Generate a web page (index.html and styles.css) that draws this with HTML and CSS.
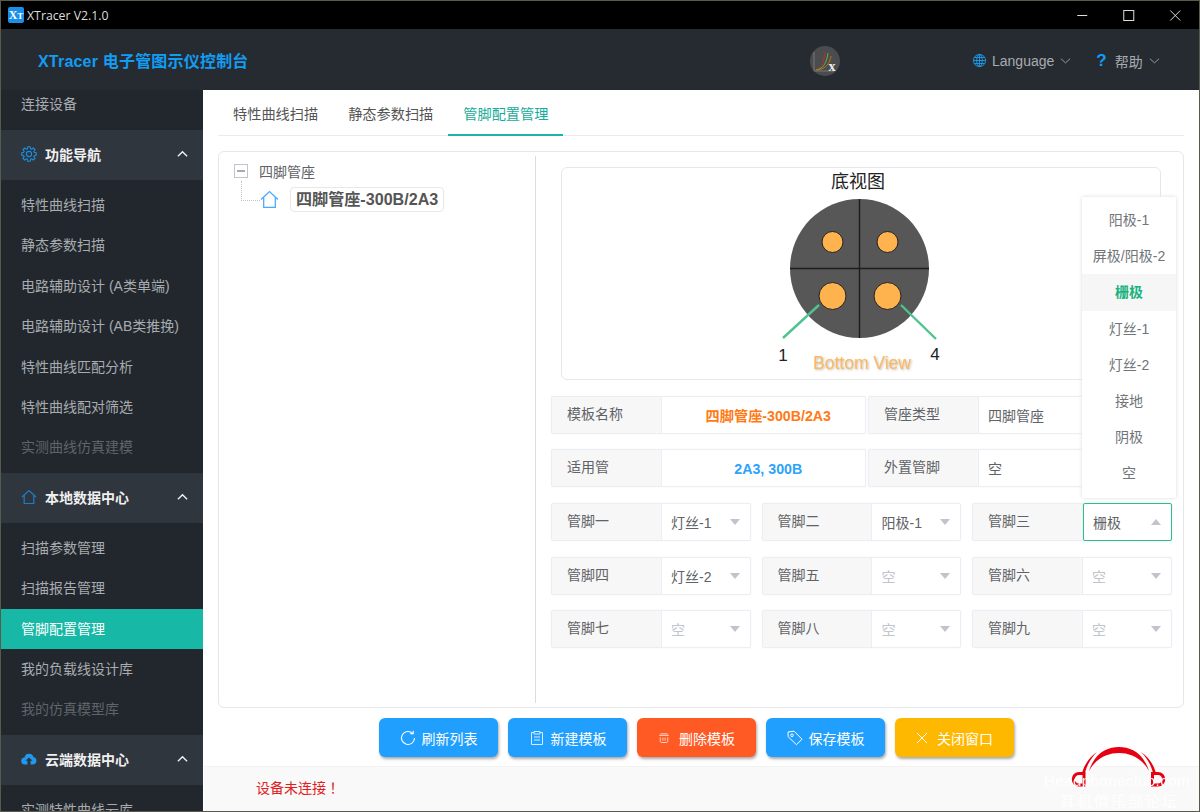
FILE: index.html
```html
<!DOCTYPE html>
<html lang="zh">
<head>
<meta charset="utf-8">
<title>XTracer V2.1.0</title>
<link rel="stylesheet" href="styles.css">
</head>
<body>
<div class="app">
  <div class="titlebar">
    <div class="app-icon">X<span>T</span></div>
    <div class="app-title">XTracer V2.1.0</div>
    <div class="win-btns">
      <svg class="win-btn" viewBox="0 0 46 29"><path d="M18 14.5h10" stroke="#ddd" stroke-width="1" fill="none"/></svg>
      <svg class="win-btn" viewBox="0 0 46 29"><rect x="18.5" y="9.5" width="10" height="10" stroke="#ddd" fill="none"/></svg>
      <svg class="win-btn" viewBox="0 0 46 29"><path d="M18 9.5l10 10M28 9.5l-10 10" stroke="#ddd" fill="none"/></svg>
    </div>
  </div>
  <header class="header">
    <div class="brand">XTracer 电子管图示仪控制台</div>
    <svg class="logo" viewBox="0 0 30 30">
      <circle cx="15" cy="15" r="15" fill="#4a4c4d"/>
      <path d="M5 24C12 23 14 14 15 6" stroke="#a33" fill="none"/>
      <path d="M6 24C14 23 17 15 18 7" stroke="#6a5" fill="none"/>
      <path d="M7 24C16 23 20 17 21 10" stroke="#b70" fill="none"/>
      <path d="M4 6v19h20" stroke="#8a8a8a" stroke-width=".7" fill="none"/>
      <text x="22" y="25" class="logo-x">x</text>
    </svg>
    <div class="head-menu lang">
      <svg class="ico16" viewBox="0 0 16 16"><g fill="none" stroke="#1a9ae8"><circle cx="8" cy="8" r="6.5"/><ellipse cx="8" cy="8" rx="3" ry="6.5"/><path d="M8 1.5v13M1.5 8h13M2.5 4.8h11M2.5 11.2h11"/></g></svg>
      <span>Language</span>
      <svg class="chev" viewBox="0 0 12 8"><path d="M1 1.5l5 4.5 5-4.5" fill="none" stroke="#a0a4a8"/></svg>
    </div>
    <div class="head-menu help">
      <b class="q">?</b>
      <span>帮助</span>
      <svg class="chev" viewBox="0 0 12 8"><path d="M1 1.5l5 4.5 5-4.5" fill="none" stroke="#a0a4a8"/></svg>
    </div>
  </header>
  <div class="main">
    <nav class="sidebar">
      <div class="side-inner">
        <div class="side-item">连接设备</div>
        <div class="side-group">
          <svg class="group-ico" viewBox="0 0 16 16"><g fill="none" stroke="#1a8fe0" stroke-width="1.1"><circle cx="8" cy="8" r="2.6"/><path d="M13.26 6.39L15.31 6.84V9.16L13.26 9.61L12.86 10.58L13.99 12.35L12.35 13.99L10.58 12.86L9.61 13.26L9.16 15.31H6.84L6.39 13.26L5.42 12.86L3.65 13.99L2.01 12.35L3.14 10.58L2.74 9.61L.69 9.16V6.84L2.74 6.39L3.14 5.42L2.01 3.65L3.65 2.01L5.42 3.14L6.39 2.74L6.84 .69H9.16L9.61 2.74L10.58 3.14L12.35 2.01L13.99 3.65L12.86 5.42Z"/></g></svg>
          <span>功能导航</span>
          <svg class="group-chev" viewBox="0 0 12 8"><path d="M1 6.5l5-5 5 5" fill="none" stroke="#eee" stroke-width="1.6"/></svg>
        </div>
        <div class="side-item">特性曲线扫描</div>
        <div class="side-item">静态参数扫描</div>
        <div class="side-item">电路辅助设计 (A类单端)</div>
        <div class="side-item">电路辅助设计 (AB类推挽)</div>
        <div class="side-item">特性曲线匹配分析</div>
        <div class="side-item">特性曲线配对筛选</div>
        <div class="side-item muted">实测曲线仿真建模</div>
        <div class="side-group">
          <svg class="group-ico" viewBox="0 0 16 16"><path d="M1 8l7-6.5L15 8M3.2 6.5V14.5h9.6V6.5" fill="none" stroke="#1a7fc8" stroke-width="1.2"/></svg>
          <span>本地数据中心</span>
          <svg class="group-chev" viewBox="0 0 12 8"><path d="M1 6.5l5-5 5 5" fill="none" stroke="#eee" stroke-width="1.6"/></svg>
        </div>
        <div class="side-item">扫描参数管理</div>
        <div class="side-item">扫描报告管理</div>
        <div class="side-item active">管脚配置管理</div>
        <div class="side-item">我的负载线设计库</div>
        <div class="side-item muted">我的仿真模型库</div>
        <div class="side-group">
          <svg class="group-ico" viewBox="0 0 16 16"><path d="M4 13.5a3.5 3.5 0 0 1-.5-7A4.6 4.6 0 0 1 12.4 6 3.8 3.8 0 0 1 12 13.5H9.6V9.8h2L8 6.5 4.4 9.8h2v3.7z" fill="#1e9bf0"/></svg>
          <span>云端数据中心</span>
          <svg class="group-chev" viewBox="0 0 12 8"><path d="M1 6.5l5-5 5 5" fill="none" stroke="#eee" stroke-width="1.6"/></svg>
        </div>
        <div class="side-item">实测特性曲线云库</div>
      </div>
    </nav>
    <section class="content">
      <div class="tabs">
        <div class="tab">特性曲线扫描</div>
        <div class="tab">静态参数扫描</div>
        <div class="tab on">管脚配置管理</div>
      </div>
      <div class="panel">
        <div class="tree">
          <div class="tree-root">
            <span class="minus"></span>
            <span>四脚管座</span>
          </div>
          <div class="tree-node">
            <span class="dots"></span>
            <svg class="tree-home" viewBox="0 0 18 18"><path d="M1 9l8-7.5L17 9M3.5 7.2V16.5h11V7.2" fill="none" stroke="#4aa8ff" stroke-width="1.2"/></svg>
            <span class="node-label">四脚管座-300B/2A3</span>
          </div>
        </div>
        <div class="detail">
          <div class="picture">
            <svg class="diagram" viewBox="562 168 598 211">
              <text x="858" y="188" class="t-title">底视图</text>
              <circle cx="859.500" cy="268.500" r="69.500" fill="#575757"/>
              <path d="M859.500 199v139M790 268.500h139" stroke="#1c1c1c" stroke-width="1.4"/>
              <g fill="#ffb34f" stroke="#222">
                <circle cx="832.500" cy="242" r="10.500"/>
                <circle cx="887.500" cy="242" r="10.500"/>
                <circle cx="832.500" cy="296" r="13.500"/>
                <circle cx="887.500" cy="296" r="13.500"/>
              </g>
              <path d="M819 305l-36 33M901 305l35 34" stroke="#4dc48f" stroke-width="2.4"/>
              <text x="783" y="361" class="t-num">1</text>
              <text x="935" y="360" class="t-num">4</text>
              <text x="862" y="369" class="t-view">Bottom View</text>
            </svg>
          </div>
          <div class="row-two">
            <div class="field"><div class="lab">模板名称</div><div class="val center orange">四脚管座-300B/2A3</div></div>
            <div class="field"><div class="lab">管座类型</div><div class="val">四脚管座</div></div>
          </div>
          <div class="row-two second">
            <div class="field"><div class="lab">适用管</div><div class="val center blue">2A3, 300B</div></div>
            <div class="field"><div class="lab">外置管脚</div><div class="val">空</div></div>
          </div>
          <div class="pins">
            <div class="field"><div class="lab">管脚一</div><div class="val sel">灯丝-1<i class="caret"></i></div></div>
            <div class="field"><div class="lab">管脚二</div><div class="val sel">阳极-1<i class="caret"></i></div></div>
            <div class="field open"><div class="lab">管脚三</div><div class="val sel">栅极<i class="caret up"></i></div></div>
            <div class="field"><div class="lab">管脚四</div><div class="val sel">灯丝-2<i class="caret"></i></div></div>
            <div class="field"><div class="lab">管脚五</div><div class="val sel off">空<i class="caret"></i></div></div>
            <div class="field"><div class="lab">管脚六</div><div class="val sel off">空<i class="caret"></i></div></div>
            <div class="field"><div class="lab">管脚七</div><div class="val sel off">空<i class="caret"></i></div></div>
            <div class="field"><div class="lab">管脚八</div><div class="val sel off">空<i class="caret"></i></div></div>
            <div class="field"><div class="lab">管脚九</div><div class="val sel off">空<i class="caret"></i></div></div>
          </div>
        </div>
      </div>
      <div class="actions">
        <div class="btn blue-btn"><svg class="btn-ico" viewBox="0 0 16 16"><path d="M14.500 8a6.500 6.500 0 1 1-2-4.700M13.200 .8v3h-3" fill="none" stroke="#fff" stroke-width="1.1"/></svg>刷新列表</div>
        <div class="btn blue-btn"><svg class="btn-ico" viewBox="0 0 16 16"><path d="M5 2.500H2.500v12h11v-12H11M5 1.500h6v2.500H5zM5 7h6M5 10h6" fill="none" stroke="#d6ecff"/></svg>新建模板</div>
        <div class="btn red-btn"><svg class="btn-ico small" viewBox="0 0 16 16"><path d="M1.500 4.500h13M3 7v5.500c0 1 .8 1.500 1.500 1.500h7c.7 0 1.500-.5 1.500-1.500V7M3 2.500h10M6.500 7.500v4M9.500 7.500v4" fill="none" stroke="#ffe0d5" stroke-width="1.2"/></svg>删除模板</div>
        <div class="btn blue-btn"><svg class="btn-ico" viewBox="0 0 16 16"><path d="M1 2l6-.8 8 8-5.500 5.500L1.200 6.800z" fill="none" stroke="#fff"/><circle cx="5" cy="5.300" r="1.300" fill="none" stroke="#fff"/></svg>保存模板</div>
        <div class="btn amber-btn"><svg class="btn-ico small" viewBox="0 0 12 12"><path d="M1 1l10 10M11 1L1 11" stroke="#fff" fill="none"/></svg>关闭窗口</div>
      </div>
      <div class="status" lang="zh-TW">设备未连接！</div>
    </section>
  </div>
  <ul class="dropdown">
    <li>阳极-1</li>
    <li>屏极/阳极-2</li>
    <li class="picked">栅极</li>
    <li>灯丝-1</li>
    <li>灯丝-2</li>
    <li>接地</li>
    <li>阴极</li>
    <li>空</li>
  </ul>
  <div class="mark">
    <svg class="mark-logo" viewBox="1070 745 100 44">
      <g fill="#e60012">
        <path d="M1089 771C1095 752 1108 747 1119 747C1130 747 1143 752 1149 771C1142 758 1130 753 1119 753C1108 753 1096 758 1089 771Z"/>
        <path d="M1082 773C1085 763 1090 757 1097 752C1091 758 1087 765 1085 773Z"/>
        <path d="M1156 773C1153 763 1148 757 1141 752C1147 758 1151 765 1153 773Z"/>
      </g>
      <g fill="none" stroke="#e60012" stroke-width="3">
        <path d="M1084 773.500H1079a5.700 5.700 0 0 0 0 11.500H1084Z"/>
        <path d="M1152.500 773.500H1158a5.700 5.700 0 0 1 0 11.500H1152.500Z"/>
      </g>
    </svg>
    <div class="mark-en">Headphoneclub.com</div>
    <div class="mark-cn">耳机俱乐部论坛</div>
  </div>
</div>
</body>
</html>
```
FILE: styles.css
```css
* { box-sizing: border-box; }
html, body { margin: 0; height: 100%; }
body {
  background: #5a5a4a;
  padding: 1px;
  font-family: "Liberation Sans", "Noto Sans CJK SC", sans-serif;
  font-size: 14px;
  color: #606266;
  overflow: hidden;
}
.app { position: relative; width: 1198px; height: 810px; display: flex; flex-direction: column; overflow: hidden; background: #fff; }

.titlebar { height: 28px; background: #000; display: flex; align-items: center; flex: none; }
.app-icon { width: 16px; height: 16px; margin-left: 7px; border-radius: 2px; background: #1a8fe8; color: #fff; font: bold 12px/16px "Liberation Serif", serif; text-align: center; flex: none; }
.app-icon span { font-size: 9px; }
.app-title { margin-left: 3px; color: #ddd; font-family: "Open Sans", sans-serif; font-size: 12.3px; }
.win-btns { margin-left: auto; display: flex; margin-right: 1px; }
.win-btn { width: 46.5px; height: 29px; display: block; }

.header { height: 61px; background: #262b31; display: flex; align-items: center; flex: none; position: relative; }
.brand { margin-left: 37px; font-size: 16px; font-weight: bold; color: #129cf2; width: 772px; letter-spacing: .2px; white-space: nowrap; }
.logo { width: 30px; height: 30px; margin-top: 2px; }
.logo-x { font: bold 14px "Liberation Serif", serif; fill: #eee; text-anchor: middle; }
.head-menu { display: flex; align-items: center; color: #a8acb0; font-size: 14px; padding-top: 2px; }
.lang { margin-left: 132px; }
.ico16 { width: 15px; height: 15px; margin-right: 5px; }
.chev { width: 11px; height: 8px; margin-left: 6px; }
.help { margin-left: 25px; }
.q { color: #129cf2; font-size: 17px; margin-right: 8px; }

.main { flex: 1; display: flex; min-height: 0; }
.sidebar { width: 202px; flex: none; background: #22272d; overflow: hidden; }
.side-inner { margin-top: -5px; }
.side-item { height: 40.4px; line-height: 40.4px; padding-left: 20px; color: #a8acb0; white-space: nowrap; }
.side-item:first-child { height: 40px; line-height: 38px; }
.side-item.muted { color: #5f6469; }
.side-item.active { background: #17b8a6; color: #fff; }
.side-group { height: 50px; margin: 5px 0; padding: 0 0 2px 20px; background: #30363e; display: flex; align-items: center; color: #f0f0f0; font-weight: bold; }
.group-ico { width: 16px; height: 16px; margin-right: 8px; }
.group-chev { width: 11px; height: 8px; margin-left: auto; margin-right: 15px; }

.content { flex: 1; display: flex; flex-direction: column; min-width: 0; padding-left: 1px; }
.tabs { height: 46px; margin: 0 15px 0 14px; border-bottom: 1px solid #e9ebef; display: flex; flex: none; }
.tab { height: 46px; padding: 0 15px; line-height: 49px; color: #555; font-size: 14.2px; }
.tab.on { color: #17ac9a; border-bottom: 2px solid #17b8a6; }

.panel { margin: 15px 15px 0 14px; height: 557px; border: 1px solid #e4e7ed; border-radius: 6px; display: flex; padding: 4px 0; flex: none; }
.tree { width: 317px; border-right: 1px solid #d9dce1; padding: 8px 0 0 15px; flex: none; color: #606266; }
.tree-root { display: flex; align-items: center; height: 14px; }
.minus { width: 14px; height: 14px; border: 1px solid #c0c4cc; margin-right: 11px; position: relative; }
.minus::after { content: ""; position: absolute; left: 2px; right: 2px; top: 5px; height: 2px; background: #a6a9ad; }
.tree-node { display: flex; align-items: center; margin-top: 8px; padding-left: 7px; height: 27px; }
.dots { width: 19px; height: 20px; border-left: 1px dotted #c0c4cc; border-bottom: 1px dotted #c0c4cc; margin-top: -17px; flex: none; }
.tree-home { width: 19px; height: 19px; flex: none; }
.node-label { margin-left: 11px; font-size: 16.1px; font-weight: bold; color: #555; border: 1px solid #e8e8e8; border-radius: 4px; padding: 0 5px; height: 25px; line-height: 23px; white-space: nowrap; }

.detail { flex: 1; padding: 11px 12px 0 15px; min-width: 0; position: relative; }
.picture { width: 600px; height: 213px; margin-left: 10px; border: 1px solid #e4e7ed; border-radius: 6px; }
.diagram { width: 598px; height: 211px; display: block; }
.t-title { font-size: 18px; fill: #222; text-anchor: middle; }
.t-num { font-size: 17px; fill: #222; text-anchor: middle; }
.t-view { font-size: 17.5px; fill: #ffb85c; text-anchor: middle; filter: drop-shadow(1px 1px 1px #bbb); }

.row-two { display: grid; grid-template-columns: 315px 305px; gap: 2px; margin-top: 16px; }
.row-two.second { margin-top: 15px; }
.field { display: flex; height: 38px; border: 1px solid #ebeef5; border-radius: 2px; background: #fff; box-shadow: 0 0 2px #f2f2f2; }
.lab { width: 109.5px; flex: none; background: #f7f7f7; border-right: 1px solid #ebeef5; padding-left: 15px; line-height: 34px; color: #606266; }
.val { flex: 1; line-height: 38px; padding-left: 9.5px; color: #606266; position: relative; white-space: nowrap; }
.val.center { text-align: center; font-weight: bold; padding-left: 10px; font-size: 14.2px; }
.orange { color: #ff7a14; }
.blue { color: #2ba3fb; }
.pins { display: grid; grid-template-columns: repeat(3, 199.5px); column-gap: 11px; row-gap: 15.5px; margin-top: 16px; }
.sel { line-height: 38px; }
.off { color: #c0c4cc; }
.caret { position: absolute; right: 10px; top: 15px; width: 0; height: 0; border-left: 5.5px solid transparent; border-right: 5.5px solid transparent; border-top: 6px solid #c0c4cc; }
.caret.up { border-top: 0; border-bottom: 6px solid #c0c4cc; }
.open .val { margin: -1px -1px -1px 0; border: 1px solid #2dbd8f; border-radius: 2px; box-shadow: 0 0 3px #dff5ee; }

.actions { display: flex; gap: 10px; margin: 10px 0 0 175px; flex: none; }
.btn { width: 119px; height: 39px; border-radius: 6px; color: #fff; display: flex; align-items: center; justify-content: center; box-shadow: 1px 2px 3px #a9a9a9; white-space: nowrap; }
.blue-btn { background: #209fff; }
.red-btn { background: #ff5a24; }
.amber-btn { background: #ffb800; }
.btn-ico { width: 16px; height: 16px; margin-right: 6px; }
.btn-ico.small { width: 12px; height: 12px; margin-right: 9px; }

.status { margin-top: 9px; background: #f9f9f9; border-top: 1px solid #f2f2f2; color: #e02020; padding-left: 52px; line-height: 43px; font-family: "Liberation Sans", "Noto Sans CJK TC", sans-serif; flex: 1; }

.dropdown { position: absolute; left: 1081px; top: 196px; width: 94px; height: 301px; margin: 0; padding: 5px 0; list-style: none; background: #fff; box-shadow: 0 0 4px #dcdcdc; text-align: center; color: #70757a; }
.dropdown li { height: 36.2px; line-height: 36.2px; white-space: nowrap; }
.dropdown .picked { background: #f6f6f6; color: #1ab380; font-weight: bold; }

.mark { position: absolute; left: 1039px; top: 744px; width: 159px; height: 66px; color: #fff; text-align: center; pointer-events: none; }
.mark-logo { position: absolute; left: 30px; top: 0; width: 100px; height: 44px; }
.mark-en { position: absolute; left: 4px; top: 27px; font-size: 15px; opacity: .9; white-space: nowrap; letter-spacing: .5px; }
.mark-cn { position: absolute; left: 20px; top: 45px; font-size: 15px; opacity: .9; letter-spacing: 2px; white-space: nowrap; }
```
